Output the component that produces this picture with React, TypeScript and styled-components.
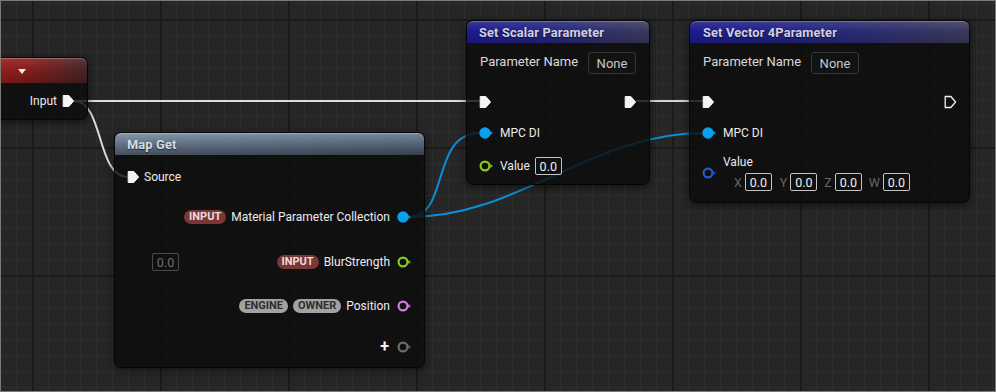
import React from 'react';
import styled, { createGlobalStyle, css } from 'styled-components';

const Global = createGlobalStyle`
  html, body { margin: 0; padding: 0; background: #262626; }
  body { font-family: Roboto, "Open Sans", "Liberation Sans", sans-serif; }
`;

const Canvas = styled.div`
  position: relative;
  width: 996px;
  height: 392px;
  overflow: hidden;
  background-color: #262626;
  background-image:
    linear-gradient(to right, #1b1b1b 0 2px, transparent 2px),
    linear-gradient(to bottom, #1b1b1b 0 2px, transparent 2px),
    linear-gradient(to right, #2d2d2d 0 1px, transparent 1px),
    linear-gradient(to bottom, #2d2d2d 0 1px, transparent 1px);
  background-size: 128px 128px, 128px 128px, 16px 16px, 16px 16px;
  background-position: 32px 0, 0 19px, 0 0, 0 3px;
  &::after {
    content: '';
    position: absolute;
    inset: 0;
    border: 1px solid #7a7a7a;
    pointer-events: none;
    z-index: 5;
  }
`;

const Wires = styled.svg`
  position: absolute;
  inset: 0;
  z-index: 0;
`;

const Node = styled.div<{ $x: number; $y: number; $w: number; $h: number }>`
  position: absolute;
  left: ${(p) => p.$x}px;
  top: ${(p) => p.$y}px;
  width: ${(p) => p.$w}px;
  height: ${(p) => p.$h}px;
  box-sizing: border-box;
  border: 1px solid #060606;
  border-radius: 7px;
  background: rgba(12, 12, 12, 0.82);
  box-shadow: 0 2px 8px rgba(0, 0, 0, 0.55);
  display: flex;
  flex-direction: column;
  z-index: 1;
  color: #ececec;
  font-size: 12px;
`;

const headerKinds = {
  red: css`
    height: 25px;
    background:
      linear-gradient(180deg, rgba(255, 255, 255, 0.1), rgba(0, 0, 0, 0) 45%, rgba(0, 0, 0, 0.22)),
      linear-gradient(90deg, #a21c1c 0%, #8c1d1d 50%, #452424 100%);
  `,
  blue: css`
    height: 22px;
    color: #cfd0e2;
    background:
      linear-gradient(180deg, rgba(255, 255, 255, 0.12), rgba(0, 0, 0, 0) 45%, rgba(0, 0, 0, 0.18)),
      linear-gradient(90deg, #1c1c90 0%, #26267e 45%, #3a3a5c 100%);
  `,
  slate: css`
    height: 22px;
    color: #d6dde4;
    background:
      linear-gradient(90deg, rgba(255, 255, 255, 0.06), rgba(0, 0, 0, 0.08)),
      linear-gradient(180deg, #8093a8 0%, #5a6a7e 50%, #3a4452 100%);
  `,
};

const Header = styled.div<{ $kind: keyof typeof headerKinds; $pad?: number }>`
  flex: none;
  display: flex;
  align-items: center;
  padding-left: ${(p) => p.$pad ?? 12}px;
  border-radius: 6px 6px 0 0;
  font-weight: 700;
  font-size: 12.8px;
  letter-spacing: 0.15px;
  text-shadow: 0 1px 1px rgba(0, 0, 0, 0.6);
  box-shadow: inset 0 1px 0 rgba(255, 255, 255, 0.25);
  ${(p) => headerKinds[p.$kind]}
`;

const DropArrow = styled.div`
  width: 0;
  height: 0;
  border-left: 4px solid transparent;
  border-right: 4px solid transparent;
  border-top: 5px solid #f0f0f0;
  margin-top: 2px;
`;

const Body = styled.div`
  flex: 1;
  display: flex;
  flex-direction: column;
  padding: 0 12px 0 12px;
`;

const Row = styled.div<{ $mt: number; $end?: boolean; $h?: number }>`
  display: flex;
  align-items: center;
  height: ${(p) => p.$h ?? 24}px;
  margin-top: ${(p) => p.$mt}px;
  justify-content: ${(p) => (p.$end ? 'flex-end' : 'flex-start')};
`;

const Spacer = styled.div`
  flex: 1;
`;

const Label = styled.span<{ $ml?: number; $mr?: number }>`
  color: #ececec;
  font-size: 12px;
  white-space: nowrap;
  margin-left: ${(p) => p.$ml ?? 0}px;
  margin-right: ${(p) => p.$mr ?? 0}px;
`;

const ParamLabel = styled.span`
  width: 108px;
  color: #d8d8d8;
  font-size: 13px;
  margin-left: 1px;
  margin-top: -4px;
  white-space: nowrap;
`;

const NoneBox = styled.div`
  width: 48px;
  height: 22px;
  box-sizing: border-box;
  border: 1px solid #353535;
  border-radius: 3px;
  background: #121212;
  color: #c8c8c8;
  font-size: 13px;
  display: flex;
  align-items: center;
  justify-content: center;
`;

const ValueBox = styled.div<{ $dim?: boolean; $ml?: number }>`
  width: 27px;
  height: 18px;
  box-sizing: border-box;
  border: 1px solid ${(p) => (p.$dim ? '#4a4a4a' : '#c4c4c4')};
  border-radius: 2px;
  color: ${(p) => (p.$dim ? '#6e6e6e' : '#f0f0f0')};
  font-size: 12.5px;
  display: flex;
  align-items: center;
  justify-content: center;
  margin-left: ${(p) => p.$ml ?? 0}px;
`;

const Tag = styled.span<{ $tone: 'red' | 'gray' }>`
  height: 14px;
  padding: 0 5px;
  border-radius: 7px;
  font-size: 11px;
  font-weight: 700;
  line-height: 14px;
  margin-right: 5px;
  ${(p) =>
    p.$tone === 'red'
      ? css`
          background: #7c3636;
          color: #ecdcdc;
        `
      : css`
          background: #a2a2a2;
          color: #2e2e2e;
        `}
`;

const Axis = styled.span<{ $ml: number }>`
  color: #666;
  font-size: 12.5px;
  margin-left: ${(p) => p.$ml}px;
  margin-right: 3px;
`;

const ValueBlock = styled.div`
  display: flex;
  align-items: center;
  margin-top: 10px;
`;

const ValueCol = styled.div`
  display: flex;
  flex-direction: column;
  margin-left: 6px;
  gap: 4px;
`;

const AxisRow = styled.div`
  display: flex;
  align-items: center;
  margin-left: 3px;
`;

const PlusSign = styled.span`
  color: #f4f4f4;
  font-size: 16px;
  font-weight: 700;
  margin-right: 8px;
  line-height: 1;
`;

const Title = styled.span``;

const ExecPin: React.FC<{ filled?: boolean }> = ({ filled = true }) => (
  <svg width="13" height="14" viewBox="0 0 13 14" style={{ flex: 'none' }}>
    <path
      d="M1.2 1.5 H6.8 L11.6 7 L6.8 12.5 H1.2 Z"
      fill={filled ? '#f4f4f4' : 'none'}
      stroke="#f4f4f4"
      strokeWidth={filled ? 1 : 1.3}
      strokeLinejoin="round"
    />
  </svg>
);

const DataPin: React.FC<{ color: string; hollow?: boolean }> = ({ color, hollow }) => (
  <svg width="15" height="12" viewBox="0 0 15 12" style={{ flex: 'none' }}>
    {hollow ? (
      <circle cx="6" cy="6" r="4.4" fill="none" stroke={color} strokeWidth="2.2" />
    ) : (
      <circle cx="6" cy="6" r="5.7" fill={color} />
    )}
    <path d="M11.4 3.9 L13.8 6 L11.4 8.1 Z" fill={color} />
  </svg>
);

const BLUE = '#0aa0ee';

export default function App() {
  return (
    <>
      <Global />
      <Canvas>
        <Wires width="996" height="392" viewBox="0 0 996 392">
          <g fill="none" strokeWidth="2" strokeLinecap="round">
            <path d="M74 101 L480 101" stroke="#dcdcdc" />
            <path d="M74 101 C 104 101, 96 177, 128 177" stroke="#dcdcdc" />
            <path d="M637 101 L704 101" stroke="#d4d4d4" />
            <path d="M409 217 C 450 217, 430 133, 480 133" stroke="#0b8fd4" />
            <path d="M409 217 C 520 217, 590 133, 704 133" stroke="#0b8fd4" />
          </g>
        </Wires>

        <Node $x={-40} $y={57} $w={128} $h={63}>
          <Header $kind="red" $pad={57}>
            <DropArrow />
          </Header>
          <Body>
            <Row $mt={6} $end>
              <Label $mr={5}>Input</Label>
              <ExecPin />
            </Row>
          </Body>
        </Node>

        <Node $x={114} $y={132} $w={311} $h={236}>
          <Header $kind="slate">
            <Title>Map Get</Title>
          </Header>
          <Body>
            <Row $mt={10}>
              <ExecPin />
              <Label $ml={4}>Source</Label>
            </Row>
            <Row $mt={16} $end>
              <Tag $tone="red">INPUT</Tag>
              <Label $mr={7}>Material Parameter Collection</Label>
              <DataPin color={BLUE} />
            </Row>
            <Row $mt={21}>
              <ValueBox $dim $ml={25}>0.0</ValueBox>
              <Spacer />
              <Tag $tone="red">INPUT</Tag>
              <Label $mr={7}>BlurStrength</Label>
              <DataPin color="#86cc1e" hollow />
            </Row>
            <Row $mt={20} $end>
              <Tag $tone="gray">ENGINE</Tag>
              <Tag $tone="gray">OWNER</Tag>
              <Label $mr={7}>Position</Label>
              <DataPin color="#d878e4" hollow />
            </Row>
            <Row $mt={17} $end>
              <PlusSign>+</PlusSign>
              <DataPin color="#6c6c6c" hollow />
            </Row>
          </Body>
        </Node>

        <Node $x={466} $y={20} $w={184} $h={165}>
          <Header $kind="blue">
            <Title>Set Scalar Parameter</Title>
          </Header>
          <Body>
            <Row $mt={8}>
              <ParamLabel>Parameter Name</ParamLabel>
              <NoneBox>None</NoneBox>
            </Row>
            <Row $mt={15}>
              <ExecPin />
              <Spacer />
              <ExecPin />
            </Row>
            <Row $mt={7}>
              <DataPin color={BLUE} />
              <Label $ml={6}>MPC DI</Label>
            </Row>
            <Row $mt={9}>
              <DataPin color="#86cc1e" hollow />
              <Label $ml={6} $mr={5}>Value</Label>
              <ValueBox>0.0</ValueBox>
            </Row>
          </Body>
        </Node>

        <Node $x={689} $y={20} $w={281} $h={183}>
          <Header $kind="blue" $pad={13}>
            <Title>Set Vector 4Parameter</Title>
          </Header>
          <Body>
            <Row $mt={8}>
              <ParamLabel>Parameter Name</ParamLabel>
              <NoneBox>None</NoneBox>
            </Row>
            <Row $mt={15}>
              <ExecPin />
              <Spacer />
              <ExecPin filled={false} />
            </Row>
            <Row $mt={7}>
              <DataPin color={BLUE} />
              <Label $ml={6}>MPC DI</Label>
            </Row>
            <ValueBlock>
              <DataPin color="#1e5ad2" hollow />
              <ValueCol>
                <Label>Value</Label>
                <AxisRow>
                  <Axis $ml={8}>X</Axis>
                  <ValueBox>0.0</ValueBox>
                  <Axis $ml={8}>Y</Axis>
                  <ValueBox>0.0</ValueBox>
                  <Axis $ml={7}>Z</Axis>
                  <ValueBox>0.0</ValueBox>
                  <Axis $ml={7}>W</Axis>
                  <ValueBox>0.0</ValueBox>
                </AxisRow>
              </ValueCol>
            </ValueBlock>
          </Body>
        </Node>
      </Canvas>
    </>
  );
}
